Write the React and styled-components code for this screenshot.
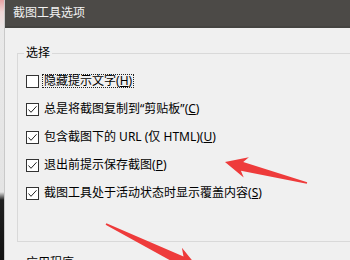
import React from 'react';
import styled, { createGlobalStyle } from 'styled-components';

const GlobalStyle = createGlobalStyle`
	html, body {
		margin: 0;
		padding: 0;
		background: #f0f0f0;
	}
	body {
		font-family: "Noto Sans", "Noto Sans CJK SC", sans-serif;
		font-size: 12px;
		color: #000;
	}
`

const Page = styled.div`
	position: relative;
	display: flex;
	width: 350px;
	height: 260px;
	overflow: hidden;
`

const Backdrop = styled.div`
	width: 4px;
	flex: none;
	background: linear-gradient(to bottom, #e6a2a4 0px, #f0d8d8 12px, #e9e9e9 30px, #e4e4e4 192px, #202020 200px, #111 100%);
`

const Window = styled.div`
	flex: 1;
	display: flex;
	flex-direction: column;
	background: #f0f0f0;
	border-left: 1px solid #c9c9c9;
	min-width: 0;
`

const TitleBar = styled.div`
	height: 28px;
	flex: none;
	box-sizing: border-box;
	display: flex;
	align-items: center;
	padding-left: 8px;
	background: #4c4a47;
	border-bottom: 2px solid #454441;
	color: #f2f2f2;
	font-size: 12px;
	line-height: 14px;
`

const Content = styled.div`
	display: flex;
	flex-direction: column;
	gap: 14px;
	padding: 18px 0 0 12px;
`

const Group = styled.fieldset`
	margin: 0 -20px 0 0;
	min-inline-size: 0;
	padding: 7px 0 ${p => p.$bottom}px 8px;
	border: 1px solid #d9d9d9;
	display: flex;
	flex-direction: column;
`

const Legend = styled.legend`
	margin-left: -2px;
	padding: 0 2px;
	font-size: 12px;
	line-height: 14px;
`

const Row = styled.label`
	display: flex;
	align-items: center;
	gap: 3px;
	height: 28px;
	white-space: nowrap;
`

const Box = styled.span`
	width: 13px;
	height: 13px;
	box-sizing: border-box;
	flex: none;
	border: 1px solid #333;
	background: #fff;
	display: flex;
	align-items: center;
	justify-content: center;
`

const Text = styled.span`
	padding: 0 1px;
	line-height: 12px;
	border: 1px dotted ${p => (p.$focused ? '#222' : 'transparent')};
`

const Overlay = styled.svg`
	position: absolute;
	left: 0;
	top: 0;
	pointer-events: none;
`

function CheckBox({ checked }) {
	return (
		<Box>
			{checked && (
				<svg width="11" height="11" viewBox="0 0 11 11">
					<polyline points="1.5,5.5 4,8.3 9.5,2.3" fill="none" stroke="#222" strokeWidth="1" />
				</svg>
			)}
		</Box>
	)
}

const options = [
	{ text: '隐藏提示文字', key: 'H', checked: false, focused: true },
	{ text: '总是将截图复制到“剪贴板”', key: 'C', checked: true },
	{ text: '包含截图下的 URL (仅 HTML)', key: 'U', checked: true },
	{ text: '退出前提示保存截图', key: 'P', checked: true },
	{ text: '截图工具处于活动状态时显示覆盖内容', key: 'S', checked: true },
]

// tapered red arrow: tip, tail, then head sizes
function arrowPoints([tx, ty], [ex, ey], headLen, headHalf, neckHalf) {
	const dx = ex - tx, dy = ey - ty
	const len = Math.hypot(dx, dy)
	const ux = dx / len, uy = dy / len
	const nx = -uy, ny = ux
	const p = (a, b) => `${(tx + a * ux + b * nx).toFixed(1)},${(ty + a * uy + b * ny).toFixed(1)}`
	const neck = headLen * 0.8
	return [
		p(0, 0), p(headLen, -headHalf), p(neck, -neckHalf),
		p(len, -0.8), p(len, 0.8),
		p(neck, neckHalf), p(headLen, headHalf),
	].join(' ')
}

export default function App() {
	return (
		<Page>
			<GlobalStyle />
			<Backdrop />
			<Window>
				<TitleBar>截图工具选项</TitleBar>
				<Content>
					<Group $bottom={34}>
						<Legend>选择</Legend>
						{options.map(o => (
							<Row key={o.key}>
								<CheckBox checked={o.checked} />
								<Text $focused={o.focused}>
									{o.text}(<u>{o.key}</u>)
								</Text>
							</Row>
						))}
					</Group>
					<Group $bottom={20}>
						<Legend>应用程序</Legend>
					</Group>
				</Content>
			</Window>
			<Overlay width="350" height="260" viewBox="0 0 350 260">
				<polygon points={arrowPoints([225, 162], [307, 183], 22, 10.5, 4.5)} fill="#ee3b3b" />
				<polygon points={arrowPoints([200, 270], [106, 224], 26, 12, 5)} fill="#ee3b3b" />
			</Overlay>
		</Page>
	)
}
